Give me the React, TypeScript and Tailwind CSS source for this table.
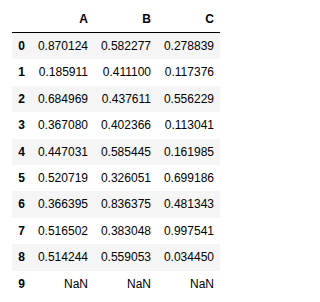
import React from "react";

const rows: [string, string, string][] = [
  ["0.870124", "0.582277", "0.278839"],
  ["0.185911", "0.411100", "0.117376"],
  ["0.684969", "0.437611", "0.556229"],
  ["0.367080", "0.402366", "0.113041"],
  ["0.447031", "0.585445", "0.161985"],
  ["0.520719", "0.326051", "0.699186"],
  ["0.366395", "0.836375", "0.481343"],
  ["0.516502", "0.383048", "0.997541"],
  ["0.514244", "0.559053", "0.034450"],
  ["NaN", "NaN", "NaN"],
];

export default function App() {
  return (
    <div
      className="w-[320px] h-[302px] bg-white pl-[12px] pt-[5.6px] text-black"
      style={{ fontFamily: '"Liberation Sans", Arial, sans-serif' }}
    >
      <table className="border-collapse table-fixed text-[12px] leading-[14.4px] w-[208px]">
        <colgroup>
          <col className="w-[19px]" />
          <col className="w-[63px]" />
          <col className="w-[63px]" />
          <col className="w-[63px]" />
        </colgroup>
        <thead className="border-b border-black">
          <tr>
            <th className="p-[6px] text-right align-bottom font-bold"></th>
            <th className="p-[6px] text-right align-bottom font-bold">A</th>
            <th className="p-[6px] text-right align-bottom font-bold">B</th>
            <th className="p-[6px] text-right align-bottom font-bold">C</th>
          </tr>
        </thead>
        <tbody>
          {rows.map((r, i) => (
            <tr key={i} className={i % 2 === 0 ? "bg-[#f5f5f5]" : "bg-white"}>
              <th className="p-[6px] text-right align-middle font-bold whitespace-nowrap">{i}</th>
              {r.map((v, j) => (
                <td key={j} className="p-[6px] text-right align-middle whitespace-nowrap">
                  {v}
                </td>
              ))}
            </tr>
          ))}
        </tbody>
      </table>
    </div>
  );
}
